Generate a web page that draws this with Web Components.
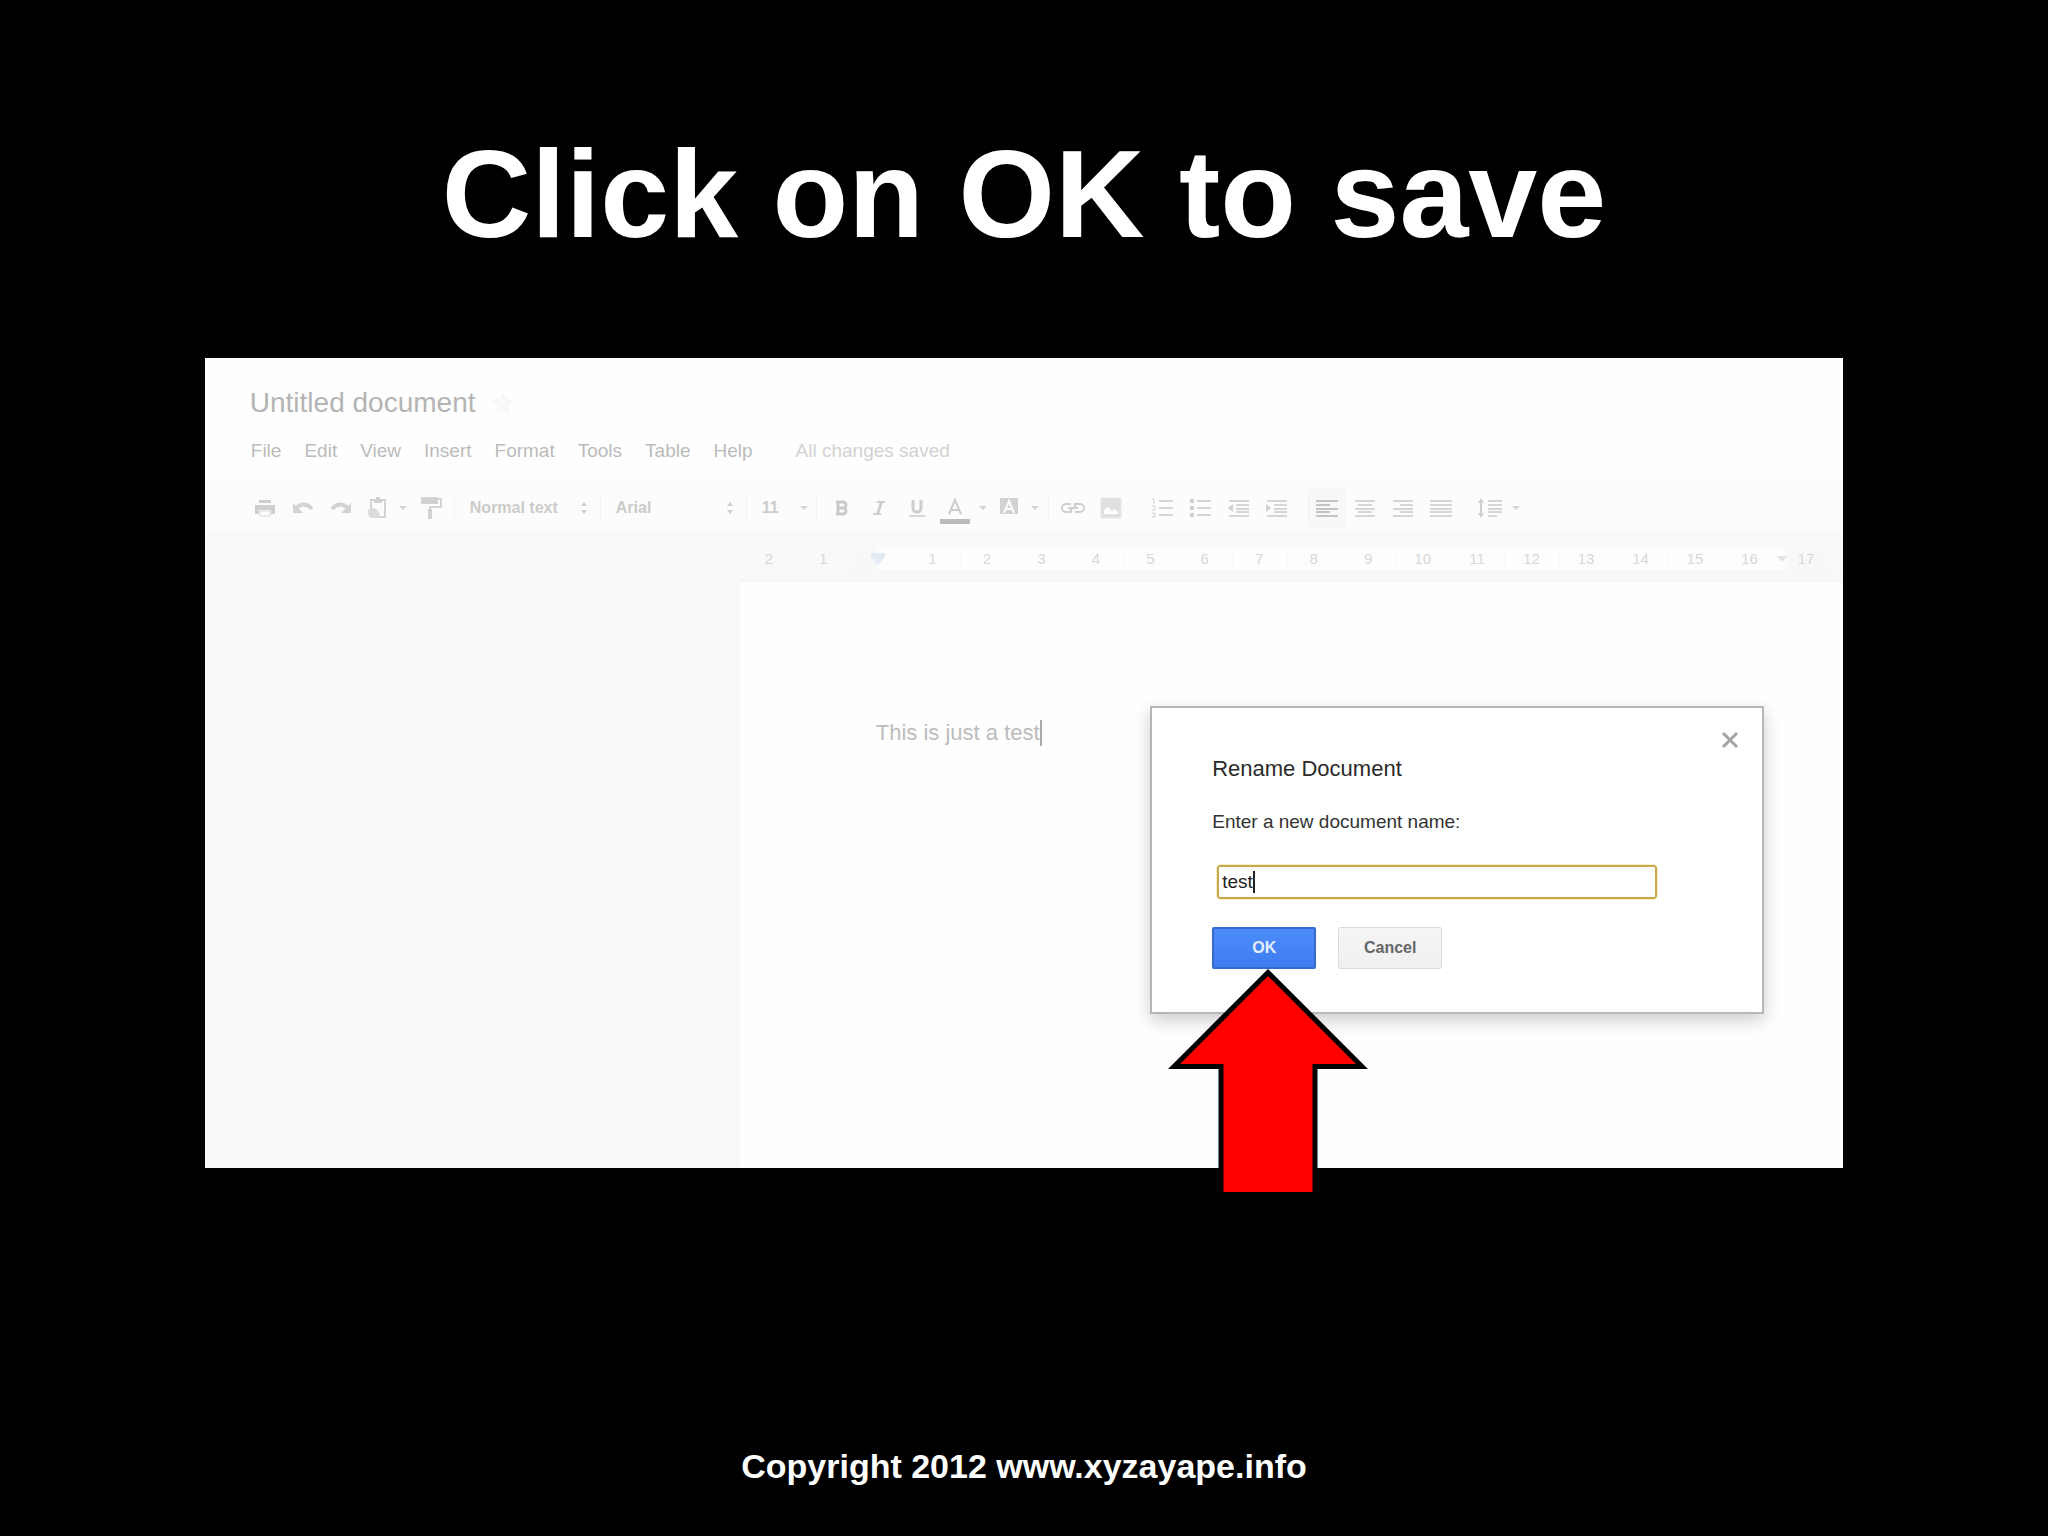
<!DOCTYPE html>
<html lang="en">
<head>
  <meta charset="utf-8">
  <title>Click on OK to save</title>
  <style>
    body {
      margin: 0;
      background: #000;
      font-family: "Liberation Sans", Arial, sans-serif;
    }
  </style>
</head>
<body>
  <template id="tutorial-slide">
    <style>
      :host {
        display: flex;
        flex-direction: column;
        box-sizing: border-box;
        min-height: 100vh;
        padding: 122px 10% 50px;
        background: #000;
        color: #fff;
      }
      h1 {
        margin: 0 0 92px;
        font-family: "Arial Rounded MT Bold", "Liberation Sans", Arial, sans-serif;
        font-size: 124px;
        line-height: 144px;
        font-weight: 700;
        text-align: center;
      }
      footer {
        margin-top: auto;
        font-family: "Arial Rounded MT Bold", "Liberation Sans", Arial, sans-serif;
        font-size: 34px;
        line-height: 40px;
        font-weight: 700;
        text-align: center;
      }
    </style>
    <h1><slot name="title"></slot></h1>
    <slot></slot>
    <footer><slot name="footer"></slot></footer>
  </template>

  <template id="docs-window">
    <style>
      :host {
        display: block;
        position: relative;
        background: #fefefe;
        color: #b8b8b8;
      }
      header {
        padding: 29px 45px 20px;
      }
      .name {
        display: flex;
        align-items: center;
        gap: 18px;
        margin-bottom: 21px;
      }
      h2 {
        margin: 0;
        font-size: 28px;
        line-height: 32px;
        font-weight: 400;
        color: #b4b4b4;
      }
      nav {
        display: flex;
        gap: 23px;
        padding-left: 1px;
      }
      nav button {
        padding: 0;
        border: 0;
        background: none;
        font: inherit;
        font-size: 19px;
        line-height: 22px;
        color: #bbb;
      }
      nav span {
        margin-left: 20px;
        font-size: 19px;
        line-height: 22px;
        color: #d2d2d2;
      }
      .workspace {
        display: grid;
        grid-template-columns: 535px 1fr;
      }
      aside {
        background: #f9f9f9;
      }
      .page {
        box-sizing: border-box;
        min-height: 586px;
        padding: 138px 136px;
        background: #fefefe;
      }
      p {
        display: flex;
        align-items: center;
        margin: 0;
        font-size: 22px;
        line-height: 26px;
        color: #bcbcbc;
      }
      .caret {
        width: 2px;
        height: 26px;
        background: #aaa;
      }
    </style>
    <header>
      <div class="name">
        <h2><slot name="name"></slot></h2>
        <svg width="20" height="20" viewBox="0 0 20 20"><path d="M10 2l2.4 5.3 5.6.6-4.200 3.900 1.200 5.700-5-2.900-5 2.900 1.200-5.700L2 7.900l5.600-.6z" fill="#fafafa" stroke="#f6f6f6" stroke-width="2"/></svg>
      </div>
      <nav>
        <button>File</button>
        <button>Edit</button>
        <button>View</button>
        <button>Insert</button>
        <button>Format</button>
        <button>Tools</button>
        <button>Table</button>
        <button>Help</button>
        <span>All changes saved</span>
      </nav>
    </header>
    <docs-toolbar></docs-toolbar>
    <div class="workspace">
      <aside></aside>
      <main>
        <docs-ruler></docs-ruler>
        <div class="page">
          <p><slot></slot><span class="caret"></span></p>
        </div>
      </main>
    </div>
    <slot name="dialog"></slot>
  </template>

  <template id="docs-toolbar">
    <style>
      :host {
        display: flex;
        align-items: center;
        box-sizing: border-box;
        height: 48px;
        padding: 2px 41px 0;
        border-top: 1px solid #f8f8f8;
        background: #fcfcfc;
      }
      button {
        display: flex;
        align-items: center;
        justify-content: center;
        box-sizing: border-box;
        width: 38px;
        height: 38px;
        padding: 0;
        border: 0;
        background: none;
      }
      button.snug {
        width: 34px;
      }
      button.more {
        width: 18px;
      }
      button.active {
        background: #f8f8f8;
        border: 1px solid #f3f3f3;
      }
      docs-icon {
        opacity: .85;
      }
      .sep {
        width: 1px;
        height: 26px;
        margin: 0 5px 0 4px;
        background: #f4f4f4;
      }
      .space {
        width: 13px;
      }
      .pick {
        display: grid;
        width: 136px;
        align-items: center;
      }
      .pick.size {
        width: 60px;
      }
      .pick > * {
        grid-area: 1 / 1;
      }
      .pick docs-icon {
        justify-self: end;
        margin-right: 8px;
        pointer-events: none;
      }
      .pick.size docs-icon {
        margin-right: 4px;
      }
      select {
        appearance: none;
        width: 100%;
        height: 26px;
        padding: 0 0 0 10px;
        border: 0;
        background: none;
        font: inherit;
        font-size: 16px;
        font-weight: 700;
        color: #cbcbcb;
      }
    </style>
    <button aria-label="Print"><docs-icon name="print"></docs-icon></button>
    <button aria-label="Undo"><docs-icon name="undo"></docs-icon></button>
    <button aria-label="Redo"><docs-icon name="redo"></docs-icon></button>
    <button class="snug" aria-label="Web clipboard"><docs-icon name="clipboard"></docs-icon></button>
    <button class="more" aria-label="Clipboard options"><docs-icon name="down"></docs-icon></button>
    <button aria-label="Paint format"><docs-icon name="paint"></docs-icon></button>
    <span class="sep"></span>
    <span class="pick"><select aria-label="Style"><option>Normal text</option></select><docs-icon name="updown"></docs-icon></span>
    <span class="sep"></span>
    <span class="pick"><select aria-label="Font"><option>Arial</option></select><docs-icon name="updown"></docs-icon></span>
    <span class="sep"></span>
    <span class="pick size"><select aria-label="Font size"><option>11</option></select><docs-icon name="down"></docs-icon></span>
    <span class="sep"></span>
    <button aria-label="Bold"><docs-icon name="bold"></docs-icon></button>
    <button aria-label="Italic"><docs-icon name="italic"></docs-icon></button>
    <button aria-label="Underline"><docs-icon name="underline"></docs-icon></button>
    <button aria-label="Text color"><docs-icon name="color"></docs-icon></button>
    <button class="more" aria-label="Text color options"><docs-icon name="down"></docs-icon></button>
    <button class="snug" aria-label="Highlight"><docs-icon name="highlight"></docs-icon></button>
    <button class="more" aria-label="Highlight options"><docs-icon name="down"></docs-icon></button>
    <span class="sep"></span>
    <button aria-label="Insert link"><docs-icon name="link"></docs-icon></button>
    <button aria-label="Insert image"><docs-icon name="image"></docs-icon></button>
    <span class="space"></span>
    <button aria-label="Numbered list"><docs-icon name="numbers"></docs-icon></button>
    <button aria-label="Bulleted list"><docs-icon name="bullets"></docs-icon></button>
    <button aria-label="Decrease indent"><docs-icon name="outdent"></docs-icon></button>
    <button aria-label="Increase indent"><docs-icon name="indent"></docs-icon></button>
    <span class="space"></span>
    <button class="active" aria-label="Left align"><docs-icon name="left"></docs-icon></button>
    <button aria-label="Center align"><docs-icon name="center"></docs-icon></button>
    <button aria-label="Right align"><docs-icon name="right"></docs-icon></button>
    <button aria-label="Justify"><docs-icon name="justify"></docs-icon></button>
    <span class="space"></span>
    <button class="snug" aria-label="Line spacing"><docs-icon name="spacing"></docs-icon></button>
    <button class="more" aria-label="Line spacing options"><docs-icon name="down"></docs-icon></button>
  </template>

  <template id="docs-ruler">
    <style>
      :host {
        display: grid;
        grid-template-columns: repeat(20, 1fr);
        box-sizing: border-box;
        height: 52px;
        padding: 18px 12px 10px 2px;
        border-bottom: 2px solid #f5f5f7;
        background: linear-gradient(#f9f9f9 34px, #f8f8fb 40px);
      }
      span {
        display: flex;
        align-items: center;
        justify-content: center;
        font-size: 15px;
        line-height: 22px;
        color: #d8d8d8;
      }
      .in {
        background: linear-gradient(#f3f3f3, #f3f3f3) 0 8px / 1px 8px no-repeat #fdfdfd;
      }
      .start {
        background: linear-gradient(90deg, #f8f8f8 50%, #fdfdfd 50%);
      }
      .end {
        justify-content: space-between;
        background: linear-gradient(90deg, #fdfdfd 10%, #f8f8f8 20%);
      }
      .end::after {
        content: "";
        width: 6px;
      }
      svg {
        display: block;
      }
    </style>
  </template>

  <template id="rename-dialog">
    <style>
      :host {
        display: block;
        position: absolute;
        top: 348px;
        right: 79px;
        box-sizing: border-box;
        width: 614px;
        padding: 48px 60px 43px;
        border: 2px solid #b6b6ba;
        background: #fff;
        box-shadow: 0 6px 16px rgba(0, 0, 0, .2);
        color: #333;
      }
      h3 {
        margin: 0 0 29px;
        font-size: 22px;
        line-height: 26px;
        font-weight: 400;
        color: #2a2a2a;
      }
      label {
        display: block;
        margin-bottom: 32px;
        font-size: 19px;
        line-height: 22px;
      }
      .field {
        position: relative;
        width: 440px;
        margin: 0 0 28px 5px;
      }
      input {
        display: block;
        box-sizing: border-box;
        width: 100%;
        height: 34px;
        padding: 0 3px;
        border: 2px solid #c9a74f;
        border-radius: 3px;
        outline: 1px solid #fbf0c4;
        background: #fff;
        font: inherit;
        font-size: 19px;
        color: #222;
      }
      .caret {
        position: absolute;
        left: 36px;
        top: 6px;
        width: 2px;
        height: 22px;
        background: #222;
      }
      .actions {
        display: flex;
        gap: 22px;
      }
      .actions button {
        box-sizing: border-box;
        width: 104px;
        height: 42px;
        padding: 0;
        border: 1px solid #dcdcdc;
        border-radius: 2px;
        background: linear-gradient(#f5f5f5, #f0f0f0);
        font: inherit;
        font-size: 16px;
        font-weight: 700;
        color: #666;
      }
      .actions .ok {
        border: 2px solid #3569cf;
        background: linear-gradient(#4b8cfa, #3f7df0);
        color: #e4eeff;
      }
      .close {
        position: absolute;
        top: 22px;
        right: 22px;
        padding: 0;
        border: 0;
        background: none;
      }
      .close svg {
        display: block;
      }
    </style>
    <button class="close" aria-label="Close">
      <svg width="20" height="20" viewBox="0 0 20 20"><path d="M3 3l14 14M17 3L3 17" stroke="#a4a4a4" stroke-width="3"/></svg>
    </button>
    <h3>Rename Document</h3>
    <label for="name">Enter a new document name:</label>
    <div class="field">
      <input id="name" type="text" value="test">
      <span class="caret"></span>
    </div>
    <div class="actions">
      <button class="ok">OK</button>
      <button>Cancel</button>
    </div>
    <slot></slot>
  </template>

  <template id="pointer-arrow">
    <style>
      :host {
        display: block;
        position: absolute;
        left: 16px;
        top: 260px;
      }
      svg {
        display: block;
      }
    </style>
    <svg width="200" height="230" viewBox="0 0 200 230">
      <path d="M100 4.500L194 98.500H147V226.500H53V98.500H6z" fill="#f00" stroke="#000" stroke-width="5"/>
    </svg>
  </template>

  <tutorial-slide>
    <span slot="title">Click on OK to save</span>
    <docs-window>
      <span slot="name">Untitled document</span>
      This is just a test
      <rename-dialog slot="dialog"><pointer-arrow></pointer-arrow></rename-dialog>
    </docs-window>
    <span slot="footer">Copyright 2012 www.xyzayape.info</span>
  </tutorial-slide>

  <script>
    // each icon: [width, height, markup]
    const ICONS = {
      print: [22, 20, '<path d="M5 2h12v3H5zM1 7h20v9h-4v-4H5v4H1z" fill="#c8c8c8"/><path d="M6 13h10v5H6z" fill="#fff" stroke="#d4d4d4"/>'],
      undo: [22, 18, '<path d="M4 10C8 4 15 4 20 10" fill="none" stroke="#cdcdcd" stroke-width="4"/><path d="M1 4v10h10z" fill="#cdcdcd"/>'],
      redo: [22, 18, '<path d="M18 10C14 4 7 4 2 10" fill="none" stroke="#cdcdcd" stroke-width="4"/><path d="M21 4v10H11z" fill="#cdcdcd"/>'],
      clipboard: [20, 24, '<path d="M4 4h14v17H4z" fill="#fcfcfc" stroke="#cecece" stroke-width="2"/><path d="M7 3h2V1h4v2h2v4H7z" fill="#c8c8c8"/><path d="M1 14q5-4 9 0l3 4v4H3q-3-4-2-8z" fill="#d6d6d6"/>'],
      paint: [24, 24, '<path d="M2 1h17v7H2z" fill="#cacaca"/><path d="M19 3h3v8H11v3" fill="none" stroke="#cecece" stroke-width="2"/><path d="M9 13h4v10H9z" fill="#cacaca"/>'],
      down: [8, 4, '<path d="M0 0h8L4 4z" fill="#cecece"/>'],
      updown: [8, 12, '<path d="M1 4l3-4 3 4zM1 8h6l-3 4z" fill="#c8c8c8"/>'],
      bold: [18, 20, '<path d="M4 4h7a3 3 0 0 1 0 6H5m6 0a3 3 0 0 1 0 6H4M6 4v12" fill="none" stroke="#c2c2c2" stroke-width="3"/>'],
      italic: [18, 20, '<path d="M7 4h8M3 16h8M11 4L7 16" fill="none" stroke="#c6c6c6" stroke-width="2"/><path d="M12 4L8 16" stroke="#c6c6c6" stroke-width="2"/>'],
      underline: [18, 20, '<path d="M5 2v8q0 4 4 4t4-4V2" fill="none" stroke="#c8c8c8" stroke-width="3"/><path d="M1 17h16v2H1z" fill="#d2d2d2"/>'],
      color: [30, 32, '<path d="M9 22l6-14 6 14M11 18h8" fill="none" stroke="#c4c4c4" stroke-width="2"/><path d="M0 27h30v5H0z" fill="#b0b0b0"/>'],
      highlight: [18, 24, '<path d="M0 2h18v16H0z" fill="#cbcbcb"/><path d="M4 17L9 5l5 12M6 13h6" fill="none" stroke="#fff" stroke-width="2"/>'],
      link: [26, 14, '<path d="M11 3H6a4 4 0 0 0 0 8h5V8M15 6V3h5a4 4 0 0 1 0 8h-5M8 7h10" fill="none" stroke="#c8c8c8" stroke-width="2"/>'],
      image: [22, 22, '<path d="M1 1h20v20H1z" fill="#dcdcdc" stroke="#e4e4e4"/><path d="M4 17v-4l4-3 4 4 3-2 3 3v2z" fill="#fff"/>'],
      numbers: [22, 22, '<path d="M8 4h14M8 11h14M8 18h14" stroke="#d0d0d0" stroke-width="2"/><path d="M1 2h2v5M1 9h3v4H1M1 16h3v4H1" fill="none" stroke="#c8c8c8"/>'],
      bullets: [22, 22, '<path d="M8 4h14M8 11h14M8 18h14" stroke="#d0d0d0" stroke-width="2"/><path d="M1 2h4v4H1zM1 9h4v4H1zM1 16h4v4H1z" fill="#cacaca"/>'],
      outdent: [22, 18, '<path d="M2 2h20M9 6h13M9 10h13M9 13h13M2 17h20" stroke="#d0d0d0" stroke-width="2"/><path d="M6 5v8L1 9z" fill="#cacaca"/>'],
      indent: [22, 18, '<path d="M2 2h20M9 6h13M9 10h13M9 13h13M2 17h20" stroke="#d0d0d0" stroke-width="2"/><path d="M1 5v8l5-4z" fill="#cacaca"/>'],
      left: [22, 18, '<path d="M0 2h22M0 6h14M0 10h22M0 13h14M0 17h22" stroke="#bcbcbc" stroke-width="2"/>'],
      center: [22, 18, '<path d="M1 2h20M4 6h14M1 10h20M4 13h14M1 17h20" stroke="#d0d0d0" stroke-width="2"/>'],
      right: [22, 18, '<path d="M1 2h20M8 6h13M1 10h20M8 13h13M1 17h20" stroke="#d0d0d0" stroke-width="2"/>'],
      justify: [22, 18, '<path d="M0 2h22M0 6h22M0 10h22M0 13h22M0 17h22" stroke="#d0d0d0" stroke-width="2"/>'],
      spacing: [26, 20, '<path d="M4 3v14" stroke="#c8c8c8" stroke-width="2"/><path d="M1 5l3-5 3 5zM1 15l3 5 3-5z" fill="#c8c8c8"/><path d="M11 3h14M11 7h14M11 11h14M11 14h14M11 18h9" stroke="#d0d0d0" stroke-width="2"/>']
    }

    customElements.define('docs-icon', class extends HTMLElement {
      constructor() {
        super()
        this.attachShadow({ mode: 'open' })
      }

      connectedCallback() {
        const [w, h, body] = ICONS[this.getAttribute('name')]
        this.shadowRoot.innerHTML = `
          <style>:host { display: block; } svg { display: block; }</style>
          <svg width="${w}" height="${h}" viewBox="0 0 ${w} ${h}">${body}</svg>`
      }
    })

    function define(name, setup) {
      customElements.define(name, class extends HTMLElement {
        constructor() {
          super()
          const root = this.attachShadow({ mode: 'open' })
          root.appendChild(document.getElementById(name).content.cloneNode(true))
          if (setup) setup(root)
        }
      })
    }

    define('docs-ruler', root => {
      // centimetres to the left of the margin count down, then up from zero
      for (let cm = -2; cm <= 17; cm++) {
        const cell = document.createElement('span')
        if (cm === 0) {
          cell.className = 'start'
          cell.innerHTML = '<svg width="14" height="12" viewBox="0 0 14 12"><path d="M0 0h14v4l-7 8-7-8z" fill="#e4ebf4"/></svg>'
        } else {
          cell.textContent = Math.abs(cm)
          if (cm > 0) cell.className = 'in'
        }
        if (cm === 17) {
          cell.className = 'end'
          cell.innerHTML = '<svg width="10" height="6" viewBox="0 0 10 6"><path d="M0 0h10L5 6z" fill="#e2e2e2"/></svg>17'
        }
        root.appendChild(cell)
      }
    })
    define('docs-toolbar')
    define('docs-window')
    define('pointer-arrow')
    define('rename-dialog')
    define('tutorial-slide')
  </script>
</body>
</html>
